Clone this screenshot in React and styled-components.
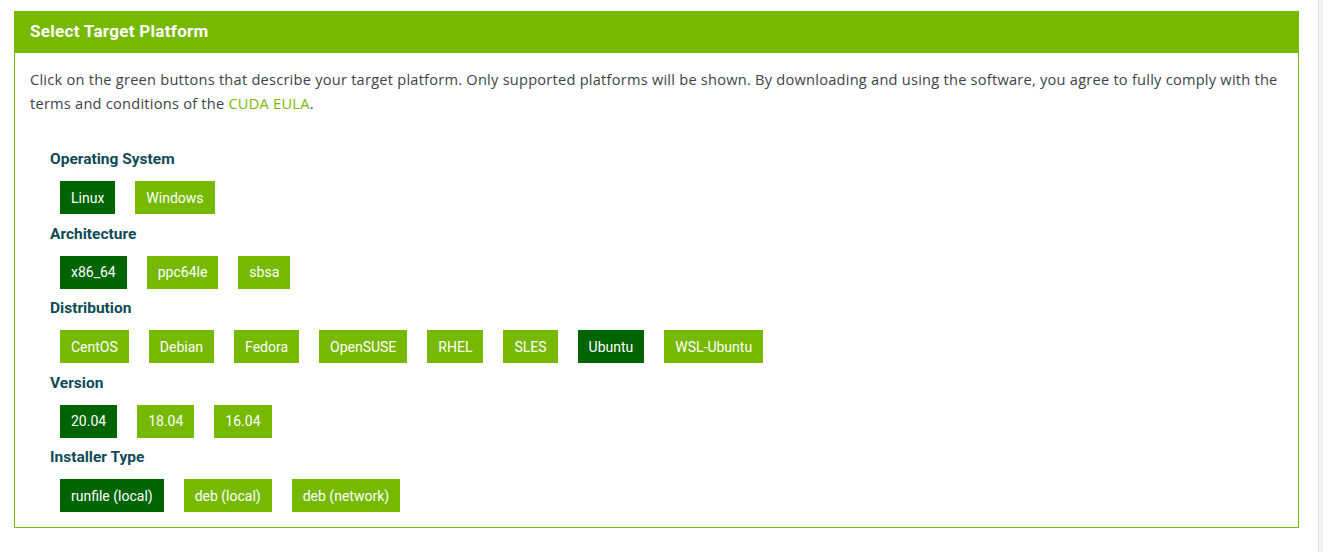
import styled, { createGlobalStyle } from "styled-components";

const GlobalStyle = createGlobalStyle`
  body {
    margin: 0;
    background: #ffffff;
    font-family: Roboto, "Liberation Sans", sans-serif;
  }
`;

const Page = styled.div`
  display: flex;
  min-height: 552px;
`;

const Main = styled.div`
  flex: 1;
  padding: 11px 19px 0 14px;
`;

const Gutter = styled.div`
  width: 4px;
  background: #f3f3f3;
  border-left: 1px solid #e2e2e2;
`;

const Panel = styled.section`
  border: 1px solid #76b900;
`;

const PanelHeader = styled.h2`
  margin: 0;
  background-color: #76b900;
  color: #ffffff;
  font-size: 17px;
  font-weight: 700;
  letter-spacing: 0.3px;
  height: 41px;
  line-height: 39px;
  padding: 0 15px;
`;

const PanelBody = styled.div`
  padding: 14px 15px 15px;
`;

const Intro = styled.p`
  margin: 0 0 33px;
  color: #3d4449;
  font-family: "Open Sans", Roboto, sans-serif;
  font-size: 14.6px;
  letter-spacing: 0.24px;
  line-height: 24px;
  a {
    color: #76b900;
    text-decoration: none;
  }
`;

const Section = styled.div`
  padding-left: 20px;
`;

const Group = styled.div`
  margin-bottom: 8.5px;
  &:last-child {
    margin-bottom: 0;
  }
`;

const Label = styled.div`
  color: #0f4b57;
  font-size: 15.5px;
  font-weight: 700;
  line-height: 22px;
  margin-bottom: 11px;
`;

const ButtonRow = styled.div`
  display: flex;
  gap: 20px;
  padding-left: 10px;
`;

const OptionButton = styled.button`
  border: none;
  font-family: inherit;
  font-size: 14px;
  height: 33px;
  padding: 0 11px;
  color: #ffffff;
  background-color: ${({ $active }) => ($active ? "#006400" : "#76b900")};
  cursor: pointer;
`;

const groups = [
  { label: "Operating System", options: ["Linux", "Windows"], active: 0 },
  { label: "Architecture", options: ["x86_64", "ppc64le", "sbsa"], active: 0 },
  {
    label: "Distribution",
    options: ["CentOS", "Debian", "Fedora", "OpenSUSE", "RHEL", "SLES", "Ubuntu", "WSL-Ubuntu"],
    active: 6,
  },
  { label: "Version", options: ["20.04", "18.04", "16.04"], active: 0 },
  { label: "Installer Type", options: ["runfile (local)", "deb (local)", "deb (network)"], active: 0 },
];

export default function App() {
  return (
    <Page>
      <GlobalStyle />
      <Main>
        <Panel>
          <PanelHeader>Select Target Platform</PanelHeader>
          <PanelBody>
            <Intro>
              Click on the green buttons that describe your target platform. Only supported platforms will be
              shown. By downloading and using the software, you agree to fully comply with the terms and
              conditions of the <a href="#eula">CUDA EULA</a>.
            </Intro>
            <Section>
              {groups.map((group) => (
                <Group key={group.label}>
                  <Label>{group.label}</Label>
                  <ButtonRow>
                    {group.options.map((option, i) => (
                      <OptionButton key={option} $active={i === group.active}>
                        {option}
                      </OptionButton>
                    ))}
                  </ButtonRow>
                </Group>
              ))}
            </Section>
          </PanelBody>
        </Panel>
      </Main>
      <Gutter />
    </Page>
  );
}
